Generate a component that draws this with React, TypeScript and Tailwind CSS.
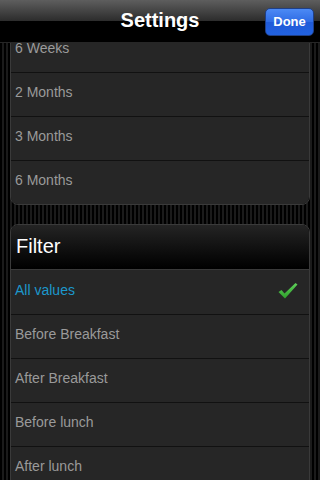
import React from "react";

const font = { fontFamily: '"Liberation Sans", Arial, Helvetica, sans-serif' };

function Row({ label, active, first }: { label: string; active?: boolean; first?: boolean }) {
  return (
    <div
      className={`h-[44px] flex items-center justify-between pl-[4px] pr-[11px] bg-[#262626] ${
        first ? "" : "border-t border-[#111111]"
      }`}
    >
      <span className={`text-[14px] leading-none -mt-[5px] ${active ? "text-[#1c98cc]" : "text-[#9a9a9a]"}`}>
        {label}
      </span>
      {active && (
        <svg width="20" height="18" viewBox="0 0 20 18" className="-mt-[2px]">
          <defs>
            <linearGradient id="chk" x1="0" y1="0" x2="0" y2="1">
              <stop offset="0" stopColor="#5fd05a" />
              <stop offset="1" stopColor="#2e9e2b" />
            </linearGradient>
          </defs>
          <path d="M0.5 10 L3.5 8 L6.5 11.5 L17.5 1 L19.5 2.5 L7 16.5 Z" fill="url(#chk)" />
        </svg>
      )}
    </div>
  );
}

export default function App() {
  return (
    <div
      className="w-[320px] h-[480px] overflow-hidden flex flex-col bg-[repeating-linear-gradient(90deg,#000000_0px,#000000_2px,#1b1b1b_2px,#1b1b1b_4px)]"
      style={font}
    >
      <div className="h-[43px] shrink-0 relative flex items-center justify-center bg-[linear-gradient(180deg,#5e5e5e_0px,#2c2c2c_21px,#000000_21px,#000000_100%)] border-b border-[#262626]">
        <span className="text-white font-bold text-[20px] -mt-[2px]">Settings</span>
        <div className="absolute left-[265px] top-[8px] w-[49px] h-[28px] rounded-[5px] border border-[#1f3f86] bg-[linear-gradient(180deg,#4c8af5_0%,#2e6be4_50%,#1f5ad8_50%,#2262e0_100%)] flex items-center justify-center">
          <span className="text-white font-bold text-[13px]">Done</span>
        </div>
      </div>
      <div className="flex-1 overflow-hidden">
        <div className="-mt-[16px] px-[10px]">
          <div className="rounded-[8px] border border-[#3a3a3a] overflow-hidden">
            <Row label="6 Weeks" first />
            <Row label="2 Months" />
            <Row label="3 Months" />
            <Row label="6 Months" />
          </div>
          <div className="mt-[19px] rounded-[8px] border border-[#3a3a3a] overflow-hidden">
            <div className="h-[44px] flex items-center pl-[5px] bg-[linear-gradient(180deg,#242424_0%,#0a0a0a_70%,#000000_100%)]">
              <span className="text-white text-[20px] -mt-[3px]">Filter</span>
            </div>
            <div className="border-t border-[#3a3a3a]">
              <Row label="All values" active first />
            </div>
            <Row label="Before Breakfast" />
            <Row label="After Breakfast" />
            <Row label="Before lunch" />
            <Row label="After lunch" />
          </div>
        </div>
      </div>
    </div>
  );
}
